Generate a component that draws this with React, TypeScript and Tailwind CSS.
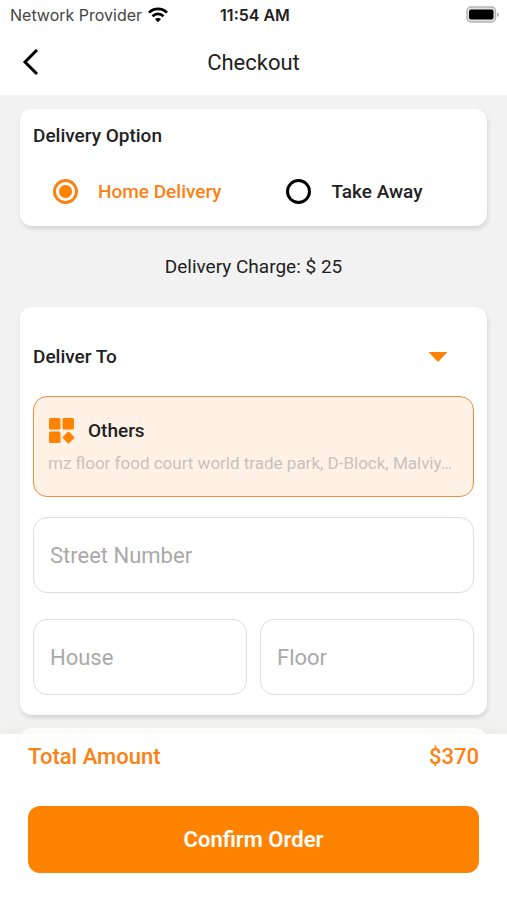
import { useState } from "react";

const cardClass = "rounded-xl bg-white px-[13px] shadow-[1px_3px_4px_rgba(0,0,0,0.12)]";
const fieldClass =
  "h-[76px] w-full min-w-0 rounded-[14px] border border-[#dedede] bg-white px-4 text-[22px] text-[#333] outline-none placeholder:text-[#a9a9a9] placeholder:opacity-100";

function StatusBar() {
  return (
    <div className="grid h-[30px] grid-cols-3 items-center pr-[7px] pl-[10px] font-['Inter',sans-serif] text-base text-[#222]">
      <div className="flex items-center gap-[6px] whitespace-nowrap text-[#444]">
        <span>Network Provider</span>
        <svg className="shrink-0" width="20" height="16" viewBox="0 0 20 16" fill="none" stroke="#000" strokeWidth="2.7" aria-hidden="true">
          <path d="M1 5.6C6.1 0.6 13.9 0.6 19 5.6" />
          <path d="M4.5 9.2C7.7 6.2 12.3 6.2 15.5 9.2" />
          <path d="M10 15.2L6.9 12.1C8.7 10.5 11.3 10.5 13.1 12.1Z" fill="#000" stroke="none" />
        </svg>
      </div>
      <span className="whitespace-nowrap text-center font-semibold">11:54 AM</span>
      <svg className="justify-self-end" width="34" height="18" viewBox="0 0 34 18" aria-hidden="true">
        <rect x="1" y="1" width="28.5" height="15" rx="4" fill="#e2e2e2" stroke="#b5b5b5" strokeWidth="1.4" />
        <rect x="3" y="3.5" width="24.5" height="10" rx="2" fill="#000" />
        <path d="M31.2 6.4C33.6 7.4 33.6 9.8 31.2 10.8Z" fill="#aaa" />
      </svg>
    </div>
  );
}

function DeliveryChoice({ label, checked, onSelect }: { label: string; checked: boolean; onSelect: () => void }) {
  return (
    <label className="flex cursor-pointer items-center gap-5 text-[19px] leading-6 font-medium text-[#222] has-checked:text-[#fb8113]">
      <input
        type="radio"
        name="delivery"
        checked={checked}
        onChange={onSelect}
        className="size-[25px] shrink-0 appearance-none rounded-full border-[3px] border-black bg-white checked:border-[#fb8113] checked:bg-[radial-gradient(circle,#ff8300_6px,white_7px)]"
      />
      {label}
    </label>
  );
}

export default function App() {
  const [option, setOption] = useState("home");
  return (
    <div className="flex h-screen flex-col bg-[#f2f2f2] font-['Roboto',sans-serif] text-[#222]">
      <header className="shrink-0 bg-white">
        <StatusBar />
        <div className="grid h-[65px] grid-cols-[1fr_auto_1fr] items-center px-[22px]">
          <button type="button" aria-label="Back" className="justify-self-start">
            <svg width="18" height="28" viewBox="0 0 18 28" fill="none" stroke="#000" strokeWidth="3" aria-hidden="true">
              <path d="M15 1L3 13L15 25" />
            </svg>
          </button>
          <h1 className="text-[22px]">Checkout</h1>
        </div>
      </header>

      <main className="min-h-0 flex-1 overflow-y-auto px-5 pt-[14px] [scrollbar-width:none]">
        <section className={`${cardClass} pt-[15px] pb-[22px]`}>
          <h2 className="text-[19px] leading-6 font-medium">Delivery Option</h2>
          <div className="mt-[31px] grid grid-cols-[234fr_188fr] pl-5">
            <DeliveryChoice label="Home Delivery" checked={option === "home"} onSelect={() => setOption("home")} />
            <DeliveryChoice label="Take Away" checked={option === "away"} onSelect={() => setOption("away")} />
          </div>
        </section>

        <p className="pt-[29px] pb-7 text-center text-[19px] leading-6">Delivery Charge: $ 25</p>

        <section className={`${cardClass} pt-[38px] pb-5`}>
          <button type="button" className="flex w-full items-center justify-between pr-[26px] text-[19px] leading-6 font-medium">
            Deliver To
            <svg width="20" height="10" viewBox="0 0 20 10" fill="#ff8300" aria-hidden="true">
              <path d="M0.5 0H19.5L10 10Z" />
            </svg>
          </button>
          <button
            type="button"
            className="mt-[27px] block h-[101px] w-full rounded-[14px] border border-[#f58b3c] bg-[#fff1e6] px-[14px] text-left"
          >
            <span className="flex items-center gap-[13px] text-[19px] leading-7 font-medium">
              <svg width="27" height="27" viewBox="0 0 27 27" fill="#ff8300" aria-hidden="true">
                <rect x="1" y="1" width="11.5" height="11.5" rx="1.5" />
                <rect x="14.5" y="1" width="11.5" height="11.5" rx="1.5" />
                <rect x="1" y="14.5" width="11.5" height="11.5" rx="1.5" />
                <rect x="16" y="16" width="9" height="9" rx="1.2" transform="rotate(45 20.5 20.5)" />
              </svg>
              Others
            </span>
            <span className="mt-1 block truncate text-[17px] leading-7 text-[#c8c2bd]">
              mz floor food court world trade park, D-Block, Malviy…
            </span>
          </button>
          <input className={`${fieldClass} mt-5`} aria-label="Street Number" placeholder="Street Number" />
          <div className="mt-[26px] grid grid-cols-2 gap-[13px]">
            <input className={fieldClass} aria-label="House" placeholder="House" />
            <input className={fieldClass} aria-label="Floor" placeholder="Floor" />
          </div>
        </section>

        <section className={`${cardClass} mt-[13px] h-6`} />
      </main>

      <footer className="shrink-0 bg-white px-7 pt-[9px] pb-[27px] shadow-[0_-2px_16px_rgba(120,90,50,0.05)]">
        <div className="flex justify-between text-[22px] leading-7 font-medium text-[#fb8113]">
          <span>Total Amount</span>
          <span>$370</span>
        </div>
        <button type="button" className="mt-[35px] h-[67px] w-full rounded-xl bg-[#ff8300] text-[22px] font-semibold text-white">
          Confirm Order
        </button>
      </footer>
    </div>
  );
}
